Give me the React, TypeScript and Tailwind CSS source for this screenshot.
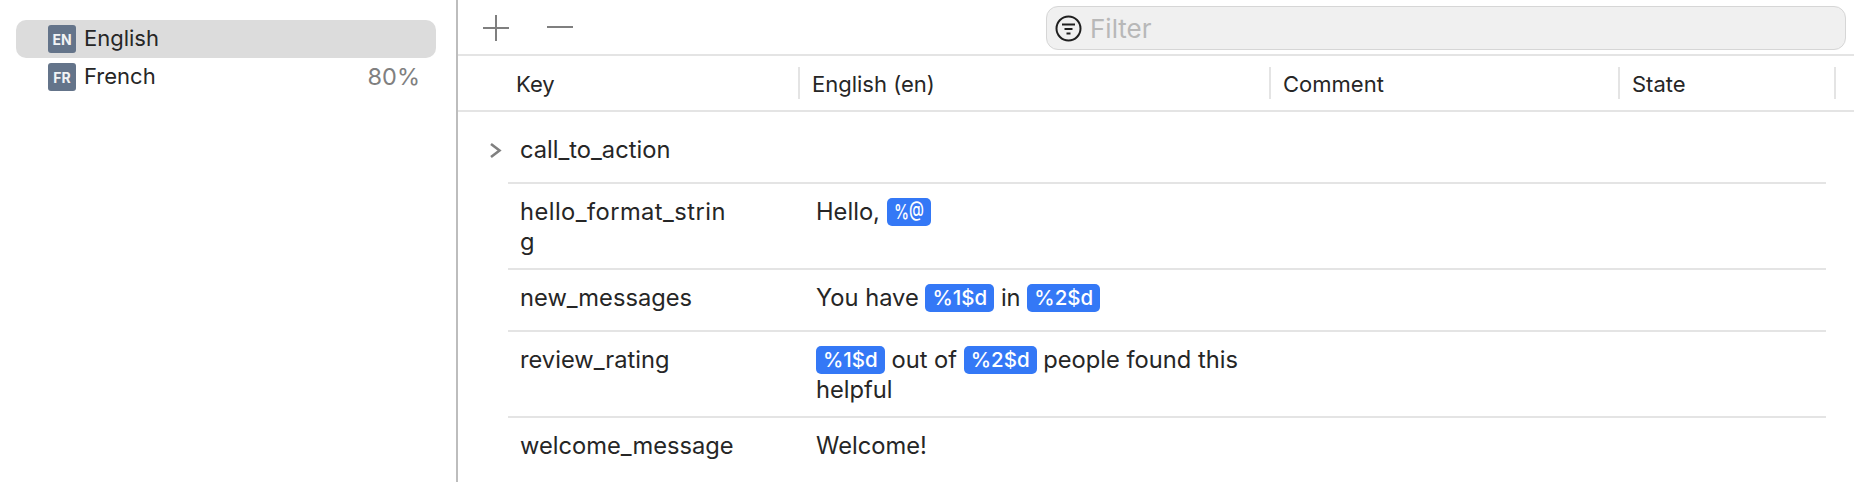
import { ReactNode } from "react";

const Token = ({ children }: { children: ReactNode }) => (
  <span className="inline-block h-[28px] rounded-[5px] bg-[#3478f6] px-[7px] align-[1px] text-[20.5px] leading-[27px] font-medium text-white">
    {children}
  </span>
);

const Lang = ({
  code,
  name,
  percent,
  selected,
}: {
  code: string;
  name: string;
  percent?: string;
  selected?: boolean;
}) => (
  <div
    className={`flex h-[38px] items-center rounded-[10px] pr-[16px] pl-[32px] ${
      selected ? "bg-[#dcdcdc]" : ""
    }`}
  >
    <span className="flex h-[28px] w-[28px] items-center justify-center rounded-[3px] bg-[#64748a] text-[14px] font-bold text-[#f1f3f5]">
      {code}
    </span>
    <span className="mb-[2px] ml-[8px] text-[22px] text-[#262626]">{name}</span>
    {percent && <span className="ml-auto text-[23.5px] text-[#808080]">{percent}</span>}
  </div>
);

const HeaderCell = ({ label, className }: { label: string; className: string }) => (
  <div className={`flex h-[32px] items-center border-r-2 border-[#e4e4e4] text-[22px] text-[#262626] ${className}`}>
    <span className="mt-[2px]">{label}</span>
  </div>
);

const Row = ({
  name,
  height,
  top,
  nameClass,
  children,
  chevron,
  last,
}: {
  name: string;
  height: string;
  top?: string;
  nameClass?: string;
  children?: ReactNode;
  chevron?: boolean;
  last?: boolean;
}) => (
  <div className={`relative flex ${height} ${top ?? "pt-[13px]"} ${last ? "" : "border-b-2 border-[#e4e4e4]"}`}>
    {chevron && (
      <svg className="absolute top-[30px] -left-[19px]" width="14" height="17" viewBox="0 0 14 17" fill="none">
        <path d="M2 2 L10.5 8.5 L2 15" stroke="#808080" strokeWidth="2.6" />
      </svg>
    )}
    <div className={`ml-[12px] w-[216px] text-[23.7px] leading-[30px] break-all text-[#262626] ${nameClass ?? ""}`}>
      {name}
    </div>
    <div className="ml-[80px] w-[440px] text-[23.7px] leading-[30px] text-[#262626]">{children}</div>
  </div>
);

export default function App() {
  return (
    <div className="flex h-[482px] w-[1854px] overflow-hidden bg-white font-['Inter',sans-serif]">
      <div className="w-[458px] shrink-0 border-r-2 border-[#bdbdbd] pt-[20px] pr-[20px] pl-[16px]">
        <Lang code="EN" name="English" selected />
        <Lang code="FR" name="French" percent="80%" />
      </div>
      <div className="min-w-0 flex-1">
        <div className="flex h-[56px] items-start border-b-2 border-[#e4e4e4]">
          <svg className="mt-[15px] ml-[24px]" width="28" height="26" viewBox="0 0 28 26" fill="none">
            <path d="M14 0 V26 M1 13 H27" stroke="#7f7f7f" strokeWidth="2" />
          </svg>
          <svg className="mt-[15px] ml-[36px]" width="28" height="26" viewBox="0 0 28 26" fill="none">
            <path d="M1 12 H27" stroke="#7f7f7f" strokeWidth="2" />
          </svg>
          <div className="mt-[6px] mr-[8px] ml-auto flex h-[44px] w-[800px] items-center rounded-[12px] border border-[#d6d6d6] bg-[#f0f0f0] pl-[8px]">
            <svg width="27" height="27" viewBox="0 0 27 27" fill="none">
              <circle cx="13.5" cy="13.5" r="12" stroke="#1f1f1f" strokeWidth="2" />
              <path d="M7 9.5 H20 M9.5 14 H17.5 M11.5 18.5 H15.5" stroke="#1f1f1f" strokeWidth="2" />
            </svg>
            <span className="mt-[1px] ml-[8px] text-[26px] text-[#b8b8b8]">Filter</span>
          </div>
        </div>
        <div className="flex h-[56px] items-center border-b-2 border-[#e4e4e4] pl-[58px]">
          <HeaderCell label="Key" className="w-[284px]" />
          <HeaderCell label="English (en)" className="w-[471px] pl-[12px]" />
          <HeaderCell label="Comment" className="w-[349px] pl-[12px]" />
          <HeaderCell label="State" className="w-[216px] pl-[12px]" />
        </div>
        <div className="mr-[28px] ml-[50px]">
          <Row name="call_to_action" height="h-[72px]" top="pt-[23px]" chevron />
          <Row name="hello_format_string" height="h-[86px]" nameClass="tracking-[0.45px]">
            <span>Hello, </span>
            <Token>
              <span className="inline-block w-[30px] origin-left scale-x-[0.74] whitespace-nowrap">%@</span>
            </Token>
          </Row>
          <Row name="new_messages" height="h-[62px]">
            <span>You have </span>
            <Token>%1$d</Token>
            <span> in </span>
            <Token>%2$d</Token>
          </Row>
          <Row name="review_rating" height="h-[86px]">
            <Token>%1$d</Token>
            <span> out of </span>
            <Token>%2$d</Token>
            <span> people found this</span>
            <br />
            <span>helpful</span>
          </Row>
          <Row name="welcome_message" height="h-[65px]" last>
            Welcome!
          </Row>
        </div>
      </div>
    </div>
  );
}
